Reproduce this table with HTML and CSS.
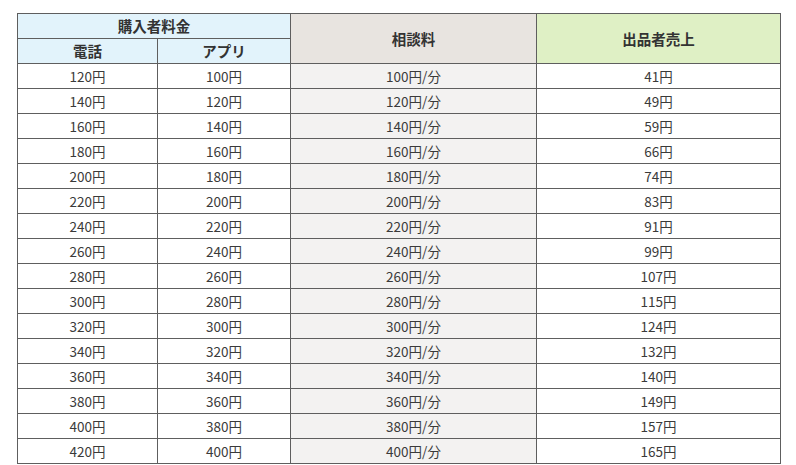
FILE: index.html
```html
<!DOCTYPE html>
<html lang="ja">
<head>
<meta charset="utf-8">
<link rel="stylesheet" href="styles.css">
</head>
<body>
<table class="price">
  <colgroup>
    <col class="c1"><col class="c2"><col class="c3"><col class="c4">
  </colgroup>
  <thead>
    <tr>
      <th colspan="2" class="buyer">購入者料金</th>
      <th rowspan="2" class="fee">相談料</th>
      <th rowspan="2" class="seller">出品者売上</th>
    </tr>
    <tr>
      <th class="buyer">電話</th>
      <th class="buyer">アプリ</th>
    </tr>
  </thead>
  <tbody>
    <tr><td>120円</td><td>100円</td><td class="fee-cell">100円/分</td><td>41円</td></tr>
    <tr><td>140円</td><td>120円</td><td class="fee-cell">120円/分</td><td>49円</td></tr>
    <tr><td>160円</td><td>140円</td><td class="fee-cell">140円/分</td><td>59円</td></tr>
    <tr><td>180円</td><td>160円</td><td class="fee-cell">160円/分</td><td>66円</td></tr>
    <tr><td>200円</td><td>180円</td><td class="fee-cell">180円/分</td><td>74円</td></tr>
    <tr><td>220円</td><td>200円</td><td class="fee-cell">200円/分</td><td>83円</td></tr>
    <tr><td>240円</td><td>220円</td><td class="fee-cell">220円/分</td><td>91円</td></tr>
    <tr><td>260円</td><td>240円</td><td class="fee-cell">240円/分</td><td>99円</td></tr>
    <tr><td>280円</td><td>260円</td><td class="fee-cell">260円/分</td><td>107円</td></tr>
    <tr><td>300円</td><td>280円</td><td class="fee-cell">280円/分</td><td>115円</td></tr>
    <tr><td>320円</td><td>300円</td><td class="fee-cell">300円/分</td><td>124円</td></tr>
    <tr><td>340円</td><td>320円</td><td class="fee-cell">320円/分</td><td>132円</td></tr>
    <tr><td>360円</td><td>340円</td><td class="fee-cell">340円/分</td><td>140円</td></tr>
    <tr><td>380円</td><td>360円</td><td class="fee-cell">360円/分</td><td>149円</td></tr>
    <tr><td>400円</td><td>380円</td><td class="fee-cell">380円/分</td><td>157円</td></tr>
    <tr><td>420円</td><td>400円</td><td class="fee-cell">400円/分</td><td>165円</td></tr>
  </tbody>
</table>
</body>
</html>
```
FILE: styles.css
```css
html, body {
  margin: 0;
  padding: 0;
  background: #ffffff;
}
body {
  font-family: "Noto Sans CJK JP", "Noto Sans", sans-serif;
  color: #333333;
}
.price {
  border-collapse: collapse;
  table-layout: fixed;
  width: 763px;
  margin: 13px 0 0 17px;
  border: 1px solid #1a1a1a;
}
.c1 { width: 140px; }
.c2 { width: 133px; }
.c3 { width: 246px; }
.c4 { width: 244px; }
.price th,
.price td {
  border: 1px solid #5e5e5e;
  height: 24px;
  padding: 0;
  text-align: center;
  vertical-align: middle;
  line-height: 24px;
}
.price th {
  font-size: 14.5px;
  font-weight: bold;
  color: #333333;
}
.price td {
  font-size: 13.5px;
  font-weight: normal;
  color: #3a3a3a;
}
.price th.buyer { background: #e2f3fb; }
.price th.fee { background: #e8e4e0; }
.price th.seller { background: #dff0c5; }
.price td.fee-cell { background: #f3f2f1; }
```
